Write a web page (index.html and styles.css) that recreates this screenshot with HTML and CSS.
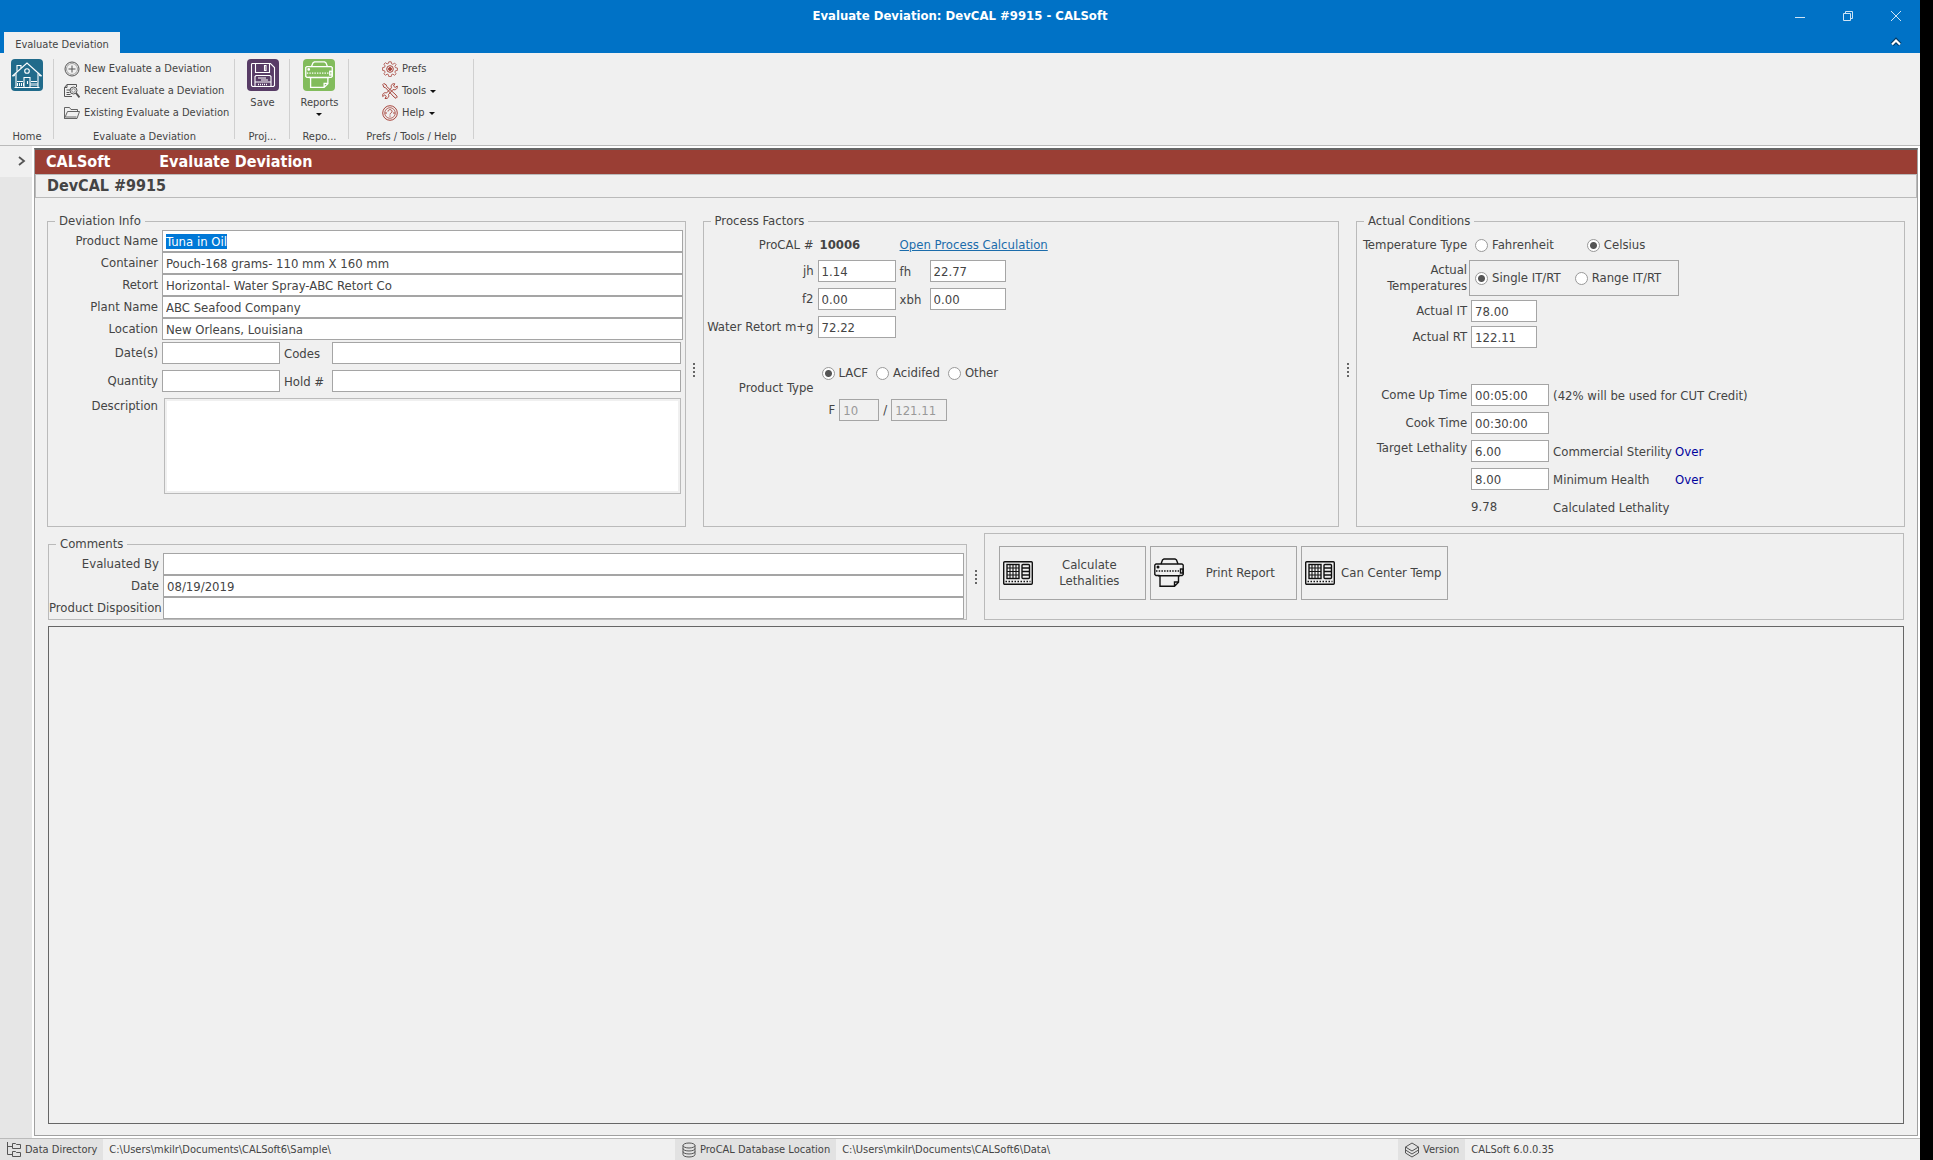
FILE: index.html
```html
<!DOCTYPE html>
<html lang="en">
<head>
    <meta charset="UTF-8">
    <meta name="viewport" content="width=device-width, initial-scale=1.0">
    <title>Evaluate Deviation: DevCAL #9915 - CALSoft</title>
    <link rel="stylesheet" href="styles.css">
</head>
<body>
    <!-- Shared icons -->
    <svg class="icon-defs" width="0" height="0">
        <symbol id="icon-calc" viewBox="0 0 30 24">
            <g fill="none" stroke="#111" stroke-width="1.4">
                <rect x="0.7" y="0.7" width="28.6" height="22.6" rx="1"/>
                <rect x="4" y="3.5" width="12" height="14"/>
                <path d="M7 3.5v14M10 3.5v14M13 3.5v14M4 7h12M4 10.5h12M4 14h12" stroke-width="1.1"/>
                <rect x="19" y="3.5" width="7.5" height="14" rx="1"/>
                <path d="M19 7h7.500M19 10.500h7.500M19 14h7.500"/>
                <path d="M2.500 20.500h25" stroke-dasharray="1.500 1.500"/>
            </g>
        </symbol>
        <symbol id="icon-printer" viewBox="0 0 30 30">
            <g fill="none" stroke="currentColor" stroke-width="1.4">
                <path d="M7 6l1.500-4 1.500-1h11l1.500 1L24 6"/>
                <path d="M5.500 17.500H2l-1.200-1V7l1.200-1h26l1.200 1v9.500l-1.200 1H25"/>
                <path d="M2 13h25" stroke-dasharray="1.500 1.200"/>
                <path d="M4 17.700h22M6 18v10.300h14.500l4-4V18M20.500 28v-4h4"/>
                <rect x="26.500" y="11" width="2.500" height="4"/>
                <circle cx="4" cy="9" r="0.800" fill="currentColor"/>
            </g>
        </symbol>
    </svg>

    <div class="app">
        <header class="titlebar">
            <h1>Evaluate Deviation: DevCAL #9915 - CALSoft</h1>
            <div class="window-buttons">
                <button type="button" aria-label="Minimize"><svg width="12" height="12"><path d="M1 7.500h10"/></svg></button>
                <button type="button" aria-label="Restore"><svg width="12" height="12"><path d="M1.500 3.500h7v7h-7zM3.500 3.500v-2h7v7h-2"/></svg></button>
                <button type="button" aria-label="Close"><svg width="12" height="12"><path d="M1 1l10 10M11 1L1 11"/></svg></button>
            </div>
        </header>

        <nav class="tabs">
            <button type="button" class="tab">Evaluate Deviation</button>
            <button type="button" class="collapse" aria-label="Collapse ribbon">
                <svg width="12" height="10"><path d="M2 7.500L6 3.500l4 4" stroke="#013a66" stroke-width="4.500"/><path d="M2 7.500L6 3.500l4 4" stroke="#fff" stroke-width="2.200"/></svg>
            </button>
        </nav>

        <div class="ribbon">
            <div class="group group-home">
                <button type="button" class="big" aria-label="Go home">
                    <svg width="32" height="32" viewBox="0 0 32 32">
                        <rect width="32" height="32" rx="4" fill="#216b8b"/>
                        <g fill="none" stroke="#fff" stroke-width="1.100">
                            <path d="M1.500 17L16 4l14.500 13M5 14v14.500h22V14"/>
                            <path d="M6 12.500V6.500h4V9M1.500 17l2.500-.5M30.500 17l-2.500-.5"/>
                            <circle cx="16" cy="12" r="2.300"/>
                            <path d="M13 28.500V18.500h6v10M16.500 22v3"/>
                            <path d="M6 22.500h6M20 22.500h6M3.500 28.500h25"/>
                            <path d="M6 25.500h7M19.500 25.500h7" stroke-width="3" stroke-dasharray="1 1"/>
                        </g>
                    </svg>
                </button>
                <span class="caption">Home</span>
            </div>
            <div class="group group-evaluate">
                <div class="menu">
                    <button type="button">
                        <svg width="16" height="16" stroke="#555" fill="none"><circle cx="8" cy="8" r="7"/><circle cx="8" cy="8" r="5.500" stroke-width=".5"/><path d="M8 4.500v7M4.500 8h7"/></svg>
                        New Evaluate a Deviation
                    </button>
                    <button type="button">
                        <svg width="16" height="16" stroke="#555" fill="none"><path d="M8 13.500H.5v-9L3 1.500h9.500V4M.5 4.500H3v-3M2.500 7h4M2.500 9.500h3M2.500 11.500h4"/><circle cx="9.500" cy="7.500" r="3.500"/><circle cx="9.500" cy="7.500" r="1.800" stroke-width=".6"/><path d="M12 10l3.500 4.500" stroke-width="2"/></svg>
                        Recent Evaluate a Deviation
                    </button>
                    <button type="button">
                        <svg width="16" height="16" stroke="#555" fill="none"><path d="M.5 13.500v-11h5l1.500 2h6.500v2M.5 13.500l3-7h12l-2.500 7zM2 12h10.500" stroke-width=".9"/></svg>
                        Existing Evaluate a Deviation
                    </button>
                </div>
                <span class="caption">Evaluate a Deviation</span>
            </div>
            <div class="group group-project">
                <button type="button" class="big">
                    <svg width="32" height="32" viewBox="0 0 32 32">
                        <rect width="32" height="32" rx="4" fill="#583c66"/>
                        <g fill="none" stroke="#fff" stroke-width="1.100">
                            <path d="M5 4.500h18.500l4 4v18l-1 1h-21l-1-1v-21z"/>
                            <path d="M8.500 4.500v9h14v-9M19 6.500v5h-1.500v-5z"/>
                            <path d="M8 27.500V17.500l1-1h14l1 1v10M8 23h16M11 19h8M14 21h7"/>
                            <path d="M11 25.500h10" stroke-width="1.500" stroke-dasharray="1 1"/>
                        </g>
                    </svg>
                    Save
                </button>
                <span class="caption">Proj...</span>
            </div>
            <div class="group group-reports">
                <button type="button" class="big">
                    <svg width="32" height="32" viewBox="0 0 32 32">
                        <rect width="32" height="32" rx="4" fill="#82bc5c"/>
                        <use href="#icon-printer" x="2" y="2" width="28" height="28" color="#fff"/>
                    </svg>
                    Reports
                    <i class="caret"></i>
                </button>
                <span class="caption">Repo...</span>
            </div>
            <div class="group group-prefs">
                <div class="menu">
                    <button type="button">
                        <svg width="16" height="16" stroke="#a8453c" fill="none"><path d="M6.800.8h2.400l.4 2 1.300.5 1.700-1.200 1.500 1.500-1.200 1.700.5 1.300 2 .4v2.400l-2 .4-.5 1.300 1.200 1.700-1.500 1.500-1.700-1.200-1.300.5-.4 2H6.800l-.4-2-1.300-.5-1.700 1.200-1.500-1.500 1.200-1.700-.5-1.300-2-.4V6.600l2-.4.5-1.300-1.200-1.700 1.500-1.500 1.700 1.200 1.300-.5z" stroke-width=".8"/><circle cx="8" cy="8" r="3.300"/><circle cx="8" cy="8" r="1.500" fill="#a8453c"/></svg>
                        Prefs
                    </button>
                    <button type="button">
                        <svg width="16" height="16" stroke="#a8453c" fill="none"><path d="M.8 1.500l1-1 2.400 1.300.5 1.700L14 12l1.300 2-1.300 1.300-2-1.300L3.500 4.700l-1.700-.5zM15.200 3l-2 1.500-1.700-1.500 1.300-2.200c-3-.7-4.300 2-3.300 4L4.500 10c-2-1-4.500.7-3.800 3.500l2-1.500 1.600 1.500-1.300 2c3 .5 4.500-2 3.500-4L11 6.500c2.500 1 4.800-.8 4.200-3.500z"/></svg>
                        Tools
                        <i class="caret"></i>
                    </button>
                    <button type="button">
                        <svg width="16" height="16" stroke="#a8453c" fill="none"><circle cx="8" cy="8" r="7.300"/><circle cx="8" cy="8" r="5.300" stroke-width=".8"/><path d="M6 6.500C6 4 10 4 10 6.500 10 8 8 8 8 9.500M8 10.500v1.200M3 8h2M11 8h2"/></svg>
                        Help
                        <i class="caret"></i>
                    </button>
                </div>
                <span class="caption">Prefs / Tools / Help</span>
            </div>
        </div>

        <div class="workspace">
            <aside class="sidebar">
                <button type="button" aria-label="Expand panel"><svg width="8" height="10"><path d="M1 1l5 4-5 4" fill="none" stroke="#555" stroke-width="1.800"/></svg></button>
            </aside>

            <main class="main">
                <div class="banner"><span>CALSoft</span><span>Evaluate Deviation</span></div>
                <h2 class="subtitle">DevCAL #9915</h2>

                <form class="content">
                    <div class="top-row">
                        <fieldset class="deviation">
                            <legend>Deviation Info</legend>
                            <div class="row stacked"><label class="label" for="product">Product Name</label><input id="product" class="grow" type="text" value="Tuna in Oil"></div>
                            <div class="row stacked"><label class="label" for="container">Container</label><input id="container" class="grow" type="text" value="Pouch-168 grams- 110 mm X 160 mm"></div>
                            <div class="row stacked"><label class="label" for="retort">Retort</label><input id="retort" class="grow" type="text" value="Horizontal- Water Spray-ABC Retort Co"></div>
                            <div class="row stacked"><label class="label" for="plant">Plant Name</label><input id="plant" class="grow" type="text" value="ABC Seafood Company"></div>
                            <div class="row stacked"><label class="label" for="location">Location</label><input id="location" class="grow" type="text" value="New Orleans, Louisiana"></div>
                            <div class="row short first">
                                <label class="label" for="dates">Date(s)</label><input id="dates" class="w-date" type="text">
                                <label class="mid" for="codes">Codes</label><input id="codes" class="grow" type="text">
                            </div>
                            <div class="row short">
                                <label class="label" for="quantity">Quantity</label><input id="quantity" class="w-date" type="text">
                                <label class="mid" for="hold">Hold #</label><input id="hold" class="grow" type="text">
                            </div>
                            <div class="row short top">
                                <label class="label" for="description">Description</label><textarea id="description" class="grow"></textarea>
                            </div>
                        </fieldset>

                        <div class="splitter"><i></i></div>

                        <fieldset class="factors">
                            <legend>Process Factors</legend>
                            <div class="row first-line"><span class="label">ProCAL #</span><b>10006</b><a href="#">Open Process Calculation</a></div>
                            <div class="row tight">
                                <label class="label" for="jh">jh</label><input id="jh" class="w-time" type="text" value="1.14">
                                <label class="small" for="fh">fh</label><input id="fh" class="w-factor" type="text" value="22.77">
                            </div>
                            <div class="row">
                                <label class="label" for="f2">f2</label><input id="f2" class="w-time" type="text" value="0.00">
                                <label class="small" for="xbh">xbh</label><input id="xbh" class="w-factor" type="text" value="0.00">
                            </div>
                            <div class="row"><label class="label" for="mg">Water Retort m+g</label><input id="mg" class="w-time" type="text" value="72.22"></div>
                            <div class="row product-type">
                                <span class="label">Product Type</span>
                                <div>
                                    <div class="radios">
                                        <label><input type="radio" name="ptype" checked>LACF</label>
                                        <label><input type="radio" name="ptype">Acidifed</label>
                                        <label><input type="radio" name="ptype">Other</label>
                                    </div>
                                    <div class="f-value">
                                        <label for="f-z">F</label><input id="f-z" class="w-z" type="text" value="10" disabled>
                                        <label for="f-temp">/</label><input id="f-temp" class="w-temp" type="text" value="121.11" disabled>
                                    </div>
                                </div>
                            </div>
                        </fieldset>

                        <div class="splitter"><i></i></div>

                        <fieldset class="conditions">
                            <legend>Actual Conditions</legend>
                            <div class="row first-line">
                                <span class="label">Temperature Type</span>
                                <div class="radios wide">
                                    <label><input type="radio" name="unit">Fahrenheit</label>
                                    <label><input type="radio" name="unit" checked>Celsius</label>
                                </div>
                            </div>
                            <div class="row tight">
                                <span class="label two-line">Actual Temperatures</span>
                                <div class="radios boxed">
                                    <label><input type="radio" name="range" checked>Single IT/RT</label>
                                    <label><input type="radio" name="range">Range IT/RT</label>
                                </div>
                            </div>
                            <div class="row tight"><label class="label" for="it">Actual IT</label><input id="it" class="w-actual" type="text" value="78.00"></div>
                            <div class="row tight"><label class="label" for="rt">Actual RT</label><input id="rt" class="w-actual" type="text" value="122.11"></div>
                            <div class="row times"><label class="label" for="cut">Come Up Time</label><input id="cut" class="w-time" type="text" value="00:05:00"><span class="note">(42% will be used for CUT Credit)</span></div>
                            <div class="row"><label class="label" for="cook">Cook Time</label><input id="cook" class="w-time" type="text" value="00:30:00"></div>
                            <div class="row"><label class="label raised" for="target">Target Lethality</label><input id="target" class="w-time" type="text" value="6.00"><label class="note" for="target">Commercial Sterility</label><span class="over">Over</span></div>
                            <div class="row"><span class="label"></span><input id="health" class="w-time" type="text" value="8.00"><label class="note" for="health">Minimum Health</label><span class="over">Over</span></div>
                            <div class="row"><span class="label"></span><output class="w-time">9.78</output><span class="note">Calculated Lethality</span></div>
                        </fieldset>
                    </div>

                    <div class="bottom-row">
                        <fieldset class="comments">
                            <legend>Comments</legend>
                            <div class="row stacked"><label class="label" for="evaluated">Evaluated By</label><input id="evaluated" class="grow" type="text"></div>
                            <div class="row stacked"><label class="label" for="date">Date</label><input id="date" class="grow" type="text" value="08/19/2019"></div>
                            <div class="row stacked"><label class="label" for="disposition">Product Disposition</label><input id="disposition" class="grow" type="text"></div>
                        </fieldset>

                        <div class="splitter"><i></i></div>

                        <div class="actions">
                            <button type="button"><svg width="30" height="24"><use href="#icon-calc"/></svg><span>Calculate Lethalities</span></button>
                            <button type="button"><svg width="30" height="30"><use href="#icon-printer"/></svg><span>Print Report</span></button>
                            <button type="button"><svg width="30" height="24"><use href="#icon-calc"/></svg><span>Can Center Temp</span></button>
                        </div>
                    </div>

                    <div class="results"></div>
                </form>
            </main>
        </div>

        <footer class="statusbar">
            <div class="status status-dir">
                <span class="status-label">
                    <svg width="16" height="16" fill="none" stroke="#555"><path d="M1.500 0v12.500H6M1.500 4.500H6"/><path d="M6.500 1.500h3l1 1h4v4h-8zM6.500 9.500h3l1 1h4v4h-8z"/></svg>
                    Data Directory
                </span>
                <span>C:\Users\mkilr\Documents\CALSoft6\Sample\</span>
            </div>
            <div class="status status-db">
                <span class="status-label">
                    <svg width="16" height="16" fill="none" stroke="#555"><ellipse cx="8" cy="3.500" rx="6" ry="2.500"/><path d="M2 3.500v9c0 3.300 12 3.300 12 0v-9M2 6.500c0 3.300 12 3.300 12 0M2 9.500c0 3.300 12 3.300 12 0"/></svg>
                    ProCAL Database Location
                </span>
                <span>C:\Users\mkilr\Documents\CALSoft6\Data\</span>
            </div>
            <div class="status status-version">
                <span class="status-label">
                    <svg width="16" height="16" fill="none" stroke="#555"><path d="M8 1l6.500 4L8 9 1.500 5zM1.500 5v6L8 15l6.500-4V5M1.500 8L8 12l6.500-4"/></svg>
                    Version
                </span>
                <span>CALSoft 6.0.0.35</span>
            </div>
        </footer>
    </div>

    <script>
        // Start with the product name ready to be typed over
        const product = document.getElementById('product');
        product.focus();
        product.select();
    </script>
</body>
</html>
```
FILE: styles.css
```css
:root {
    --blue: #0072c6;
    --bg: #f0f0f0;
    --text: #444;
    --line: #bababa;
    --input-line: #a5a5a5;
    --red: #9a3e34;
}

* {
    box-sizing: border-box;
    margin: 0;
    padding: 0;
}

body {
    background: #000;
    color: var(--text);
    font-family: "DejaVu Sans Condensed", "DejaVu Sans", Tahoma, sans-serif;
    font-size: 13px;
    line-height: 16px;
}

button,
input,
textarea {
    font: inherit;
    color: inherit;
}

button {
    background: none;
    border: none;
}

.icon-defs {
    position: absolute;
}

.app {
    display: flex;
    flex-direction: column;
    min-height: 100vh;
    margin-right: 13px;
    background: var(--bg);
}

/* Title bar and tabs */
.titlebar {
    display: grid;
    grid-template-columns: 1fr auto 1fr;
    align-items: center;
    height: 32px;
    background: var(--blue);
    color: #fff;
}

.titlebar h1 {
    grid-column: 2;
    font-size: 13px;
}

.window-buttons {
    display: flex;
    justify-content: flex-end;
}

.window-buttons button {
    width: 48px;
    height: 32px;
}

.window-buttons svg {
    display: block;
    margin: 0 auto;
    fill: none;
    stroke: #cfe4f5;
}

.tabs {
    display: flex;
    justify-content: space-between;
    height: 21px;
    padding-left: 4px;
    background: var(--blue);
}

.tab {
    width: 116px;
    padding-top: 4px;
    background: var(--bg);
    font-size: 11px;
    white-space: nowrap;
}

.collapse {
    width: 48px;
}

.collapse svg {
    fill: none;
}

/* Ribbon */
.ribbon {
    display: flex;
    height: 93px;
    border-bottom: 1px solid var(--line);
    font-size: 11px;
    line-height: 14px;
}

.group {
    display: flex;
    flex-direction: column;
    align-items: center;
    justify-content: space-between;
    padding: 6px 0 1px;
    background: linear-gradient(#d0d0d0, #d0d0d0) right 6px / 1px 80px no-repeat;
    white-space: nowrap;
}

.group-home {
    width: 54px;
}

.group-evaluate {
    width: 181px;
}

.group-project {
    width: 55px;
}

.group-reports {
    width: 59px;
}

.group-prefs {
    width: 125px;
}

.big {
    display: flex;
    flex-direction: column;
    align-items: center;
}

.big svg {
    margin-bottom: 5px;
}

.menu {
    display: flex;
    flex-direction: column;
    gap: 4px;
    align-self: flex-start;
    padding: 1px 0 0 10px;
}

.group-prefs .menu {
    padding-left: 33px;
}

.menu button {
    display: flex;
    align-items: center;
    gap: 4px;
    height: 18px;
}

.caret {
    border: 3px solid transparent;
    border-top-color: #111;
    border-bottom: none;
}

.big .caret {
    margin-top: 3px;
}

/* Work area */
.workspace {
    display: flex;
    flex: 1;
    background: #fff;
}

.sidebar {
    width: 32px;
    background: #e6e6e6;
}

.sidebar button {
    width: 32px;
    height: 31px;
    padding-left: 12px;
    background: var(--bg);
}

.main {
    display: flex;
    flex: 1;
    flex-direction: column;
    margin: 2px;
    border: 1px solid #a0a0a0;
    border-top: 2px solid #666;
    background: var(--bg);
}

.banner {
    display: flex;
    gap: 49px;
    padding-left: 11px;
    background: var(--red);
    color: #fff;
    font-size: 16px;
    font-weight: bold;
    line-height: 24px;
}

.subtitle {
    padding-left: 11px;
    border: 1px solid var(--line);
    font-size: 16px;
    line-height: 22px;
}

.content {
    display: flex;
    flex: 1;
    flex-direction: column;
    padding: 15px 12px 11px;
}

fieldset {
    min-width: 0;
    padding-top: 1px;
    border: 1px solid var(--line);
}

legend {
    margin-left: 7px;
    padding: 0 4px;
}

.top-row,
.bottom-row {
    display: flex;
}

.deviation,
.factors {
    flex: 637 1 0;
}

.conditions {
    flex: 549 1 0;
    padding-bottom: 8px;
}

.splitter {
    display: flex;
    align-items: center;
    justify-content: center;
    width: 17px;
}

.splitter i {
    width: 2px;
    height: 14px;
    background: repeating-linear-gradient(#666 0 2px, transparent 2px 4px);
}

/* Form rows */
.row {
    display: flex;
    align-items: center;
    margin-top: 6px;
}

.row.stacked {
    margin-top: 0;
}

.row.tight,
.row.first-line {
    margin-top: 4px;
}

.row.first {
    margin-top: 2px;
}

.row.top {
    align-items: flex-start;
}

.row.short {
    padding-right: 2px;
}

.row.times {
    margin-top: 36px;
}

.first-line {
    height: 22px;
}

.label {
    flex: none;
    width: 110px;
    margin-right: 4px;
    text-align: right;
    white-space: nowrap;
}

.label.two-line {
    margin-right: 2px;
    white-space: normal;
}

.label.raised {
    align-self: flex-start;
}

input[type="text"] {
    height: 22px;
    padding: 0 3px;
    border: 1px solid var(--input-line);
    background: #fff;
    outline: none;
}

input[type="text"]:disabled {
    background: var(--bg);
    color: #999;
}

input::selection {
    background: #0078d7;
    color: #fff;
}

.grow {
    flex: 1;
    min-width: 0;
}

.w-date {
    width: 118px;
}

.w-time {
    flex: none;
    width: 78px;
}

.w-factor {
    width: 76px;
}

.w-actual {
    width: 66px;
}

.w-z {
    width: 40px;
}

.w-temp {
    width: 56px;
}

.mid {
    width: 52px;
    padding-left: 4px;
}

.small {
    width: 34px;
    padding-left: 4px;
}

.mid,
.small,
.note,
.over {
    padding-top: 2px;
}

.note {
    min-width: 126px;
    padding-left: 4px;
    white-space: nowrap;
}

output {
    line-height: 22px;
}

.over {
    color: #00009c;
}

.deviation {
    padding-right: 2px;
}

textarea {
    display: block;
    height: 96px;
    margin-left: 2px;
    border: 1px solid var(--line);
    outline: 2px solid var(--bg);
    outline-offset: -3px;
    resize: none;
}

.factors b {
    width: 82px;
    padding-left: 2px;
}

a {
    color: #1b6cab;
}

.row.product-type {
    margin-top: 24px;
}

.product-type .label {
    padding-bottom: 8px;
}

.radios {
    display: flex;
    align-items: center;
    gap: 8px;
    height: 22px;
    padding-left: 4px;
    white-space: nowrap;
}

.radios.wide {
    gap: 33px;
}

.radios.boxed {
    gap: 14px;
    width: 210px;
    height: 36px;
    padding-left: 5px;
    border: 1px solid var(--input-line);
}

.radios label {
    display: flex;
    align-items: center;
    gap: 4px;
}

input[type="radio"] {
    width: 13px;
    height: 13px;
    border: 1px solid #999;
    border-radius: 50%;
    background: #fff;
    appearance: none;
}

input[type="radio"]:checked {
    background: radial-gradient(circle, #555 0 3px, #fff 4px);
}

.f-value {
    display: flex;
    align-items: center;
    gap: 4px;
    margin-top: 15px;
    padding-left: 11px;
}

/* Comments and actions */
.bottom-row {
    margin: 6px 1px;
}

.comments {
    flex: 1 1 50%;
    margin-top: 3px;
    padding-right: 2px;
}

.actions {
    display: flex;
    flex: 1 1 50%;
    align-items: flex-start;
    gap: 4px;
    padding: 12px 14px;
    border: 1px solid var(--line);
}

.actions button {
    display: flex;
    align-items: center;
    width: 147px;
    height: 54px;
    padding-left: 3px;
    border: 1px solid var(--input-line);
}

.actions svg {
    flex: none;
    color: #111;
}

.actions span {
    flex: 1;
    padding: 0 4px;
}

.results {
    flex: 1;
    margin: 0 1px;
    border: 1px solid #666;
}

/* Status bar */
.statusbar {
    display: flex;
    height: 22px;
    border-top: 1px solid var(--line);
    font-size: 11px;
    line-height: 21px;
    white-space: nowrap;
}

.status {
    display: flex;
    gap: 6px;
}

.status-dir {
    flex: 675 1 0;
}

.status-db {
    flex: 723 1 0;
}

.status-version {
    flex: 522 1 0;
}

.status-label {
    display: flex;
    align-items: center;
    gap: 3px;
    padding: 0 6px;
    background: #e2e2e2;
}
```
